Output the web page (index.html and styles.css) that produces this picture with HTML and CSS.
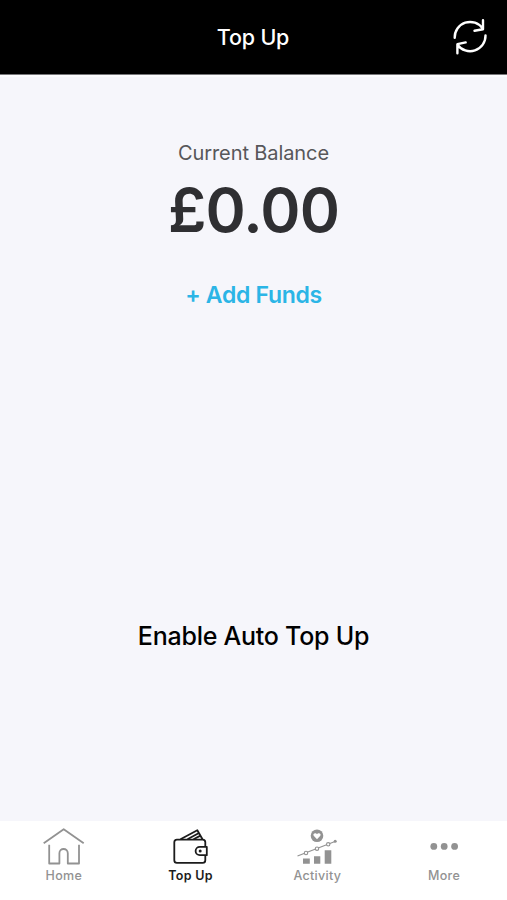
FILE: index.html
```html
<!DOCTYPE html>
<html lang="en">
<head>
    <meta charset="UTF-8">
    <meta name="viewport" content="width=device-width, initial-scale=1.0">
    <title>Top Up</title>
    <link rel="stylesheet" href="styles.css">
</head>
<body>

<header class="topBar">
    <h1 class="title">Top Up</h1>
    <button class="refreshButton" aria-label="Refresh">
        <svg width="36" height="38" viewBox="0 0 36 38">
            <path d="M2.7 19.8A15.4 15.4 0 0 1 30.7 10.5M31 2.2V11.2L22.5 12.8"/>
            <path d="M33.5 17.4A15.4 15.4 0 0 1 5.5 26.7M5.4 35.2V26.2L13.7 24.4"/>
        </svg>
    </button>
</header>

<main class="content">
    <div class="balanceLabel">Current Balance</div>
    <div class="balance">£0.00</div>
    <button class="addFunds">+ Add Funds</button>
    <button class="autoTopUp">Enable Auto Top Up</button>
</main>

<nav class="tabBar">
    <a class="tab">
        <svg class="tabIcon" width="44" height="38" viewBox="0 0 44 38">
            <path d="M2.7 16.3L22.7 2.2L42.7 16.3M8.2 17.8V36.5H18.4V26.2A4.2 4.2 0 0 1 26.8 26.2V36.5H38V17.8"/>
        </svg>
        <span class="tabLabel">Home</span>
    </a>
    <a class="tab active">
        <svg class="tabIcon" width="44" height="38" viewBox="0 0 44 38">
            <rect x="6.3" y="12.6" width="31" height="23.2" rx="2.6"/>
            <path d="M12.5 12.3L29.3 3.2L34.5 12.3M19.5 12.3L30.5 6.2M25.5 12.3L32 8.9"/>
            <path class="strap" d="M38.8 19.8H31.8A4.2 4.2 0 0 0 31.8 28.2H38.8Z"/>
            <circle class="solid" cx="32.2" cy="24" r="1.5"/>
        </svg>
        <span class="tabLabel">Top Up</span>
    </a>
    <a class="tab">
        <svg class="tabIcon" width="44" height="38" viewBox="0 0 44 38">
            <circle class="solid" cx="22" cy="8.7" r="6.3"/>
            <path class="heart" d="M22 12.2L18.7 8.8C17.3 6.5 20.7 5 22 7.3C23.3 5 26.7 6.5 25.3 8.8Z"/>
            <path class="trend" d="M2.5 29L40 14.5"/>
            <circle class="point" cx="11" cy="26" r="1.7"/>
            <circle class="point" cx="22" cy="21.7" r="1.7"/>
            <circle class="point" cx="33.2" cy="17.3" r="1.7"/>
            <circle class="solid" cx="40.2" cy="14.2" r="1.5"/>
            <path class="solid" d="M8 31.5H14.8V36.7H8ZM19 29.3H25.3V36.7H19ZM29.7 23.2H36.3V36.7H29.7Z"/>
        </svg>
        <span class="tabLabel">Activity</span>
    </a>
    <a class="tab">
        <svg class="tabIcon" width="44" height="38" viewBox="0 0 44 38">
            <circle class="solid" cx="11.8" cy="19.4" r="3.4"/>
            <circle class="solid" cx="22.2" cy="19.4" r="3.4"/>
            <circle class="solid" cx="32.6" cy="19.4" r="3.4"/>
        </svg>
        <span class="tabLabel">More</span>
    </a>
</nav>

</body>
</html>
```

FILE: styles.css
```css
* {
    box-sizing: border-box;
}
body {
    display: flex;
    flex-direction: column;
    height: 100vh;
    margin: 0;
    font-family: Inter, "Liberation Sans", sans-serif;
    background-color: #f6f6fb;
    color: #000;
}
button {
    padding: 0;
    border: none;
    background: none;
    font-family: inherit;
    cursor: pointer;
}
.topBar {
    display: grid;
    grid-template-columns: 1fr auto 1fr;
    align-items: center;
    height: 75px;
    padding-right: 19px;
    padding-left: 18px;
    background-color: #000;
    border-bottom: 1px solid #77777a;
    color: #fff;
}
.title {
    grid-column: 2;
    margin: 0;
    font-size: 21.5px;
    line-height: 26px;
    font-weight: 500;
    letter-spacing: -0.2px;
}
.refreshButton {
    justify-self: end;
    height: 38px;
}
.refreshButton svg {
    display: block;
    fill: none;
    stroke: #fff;
    stroke-width: 2.4;
    stroke-linecap: round;
    stroke-linejoin: round;
}
.content {
    display: flex;
    flex: 1;
    flex-direction: column;
    align-items: center;
    padding-top: 64px;
    border-top: 2px solid #fcfcfe;
}
.balanceLabel {
    font-size: 20px;
    line-height: 24px;
    letter-spacing: -0.1px;
    color: #57575a;
}
.balance {
    margin-top: 8px;
    font-size: 61px;
    line-height: 74px;
    font-weight: 600;
    letter-spacing: -0.8px;
    color: #2f2f32;
}
.addFunds {
    margin-top: 34px;
    font-size: 23px;
    line-height: 28px;
    font-weight: 600;
    letter-spacing: -0.3px;
    color: #2bb5e6;
}
.autoTopUp {
    margin-top: 311px;
    font-size: 25px;
    line-height: 32px;
    font-weight: 500;
    letter-spacing: -0.25px;
    color: #000;
}
.tabBar {
    display: flex;
    height: 79px;
    padding-top: 6px;
    background-color: #fff;
}
.tab {
    display: flex;
    flex: 1;
    flex-direction: column;
    align-items: center;
    color: #929292;
}
.active {
    color: #1c1c1c;
}
.tabIcon {
    fill: none;
    stroke: currentColor;
    stroke-width: 1.8;
    stroke-linejoin: round;
}
.tabIcon .solid {
    fill: currentColor;
    stroke: none;
}
.tabIcon .heart {
    fill: #fff;
    stroke: none;
}
.tabIcon .strap {
    fill: #fff;
}
.tabIcon .trend {
    stroke-width: 1.2;
}
.tabIcon .point {
    fill: #fff;
    stroke-width: 1.1;
}
.tabLabel {
    margin-top: 3px;
    padding-left: 1px;
    font-size: 12.5px;
    line-height: 16px;
    font-weight: 500;
    letter-spacing: 0.3px;
}
.active .tabLabel {
    font-weight: 600;
}
```
